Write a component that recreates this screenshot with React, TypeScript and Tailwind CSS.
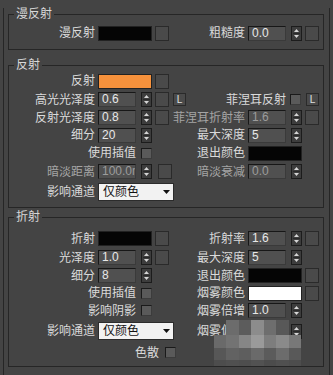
import React from "react";

type Kids = { children?: React.ReactNode };

const Spin = () => (
  <svg width="11" height="15" viewBox="0 0 11 15" className="ml-[2px] block shrink-0">
    <rect x="0.5" y="0.5" width="10" height="14" fill="#3d3d3d" stroke="#1c1c1c" />
    <line x1="2" y1="7.5" x2="9" y2="7.5" stroke="#2a2a2a" />
    <path d="M3 6h5L5.5 3z" fill="#d6d6d6" />
    <path d="M3 9h5l-2.5 3z" fill="#d6d6d6" />
  </svg>
);

const Num = ({ v, dim = false }: { v: string; dim?: boolean }) => (
  <div
    className={`h-[15px] w-[38px] shrink-0 overflow-hidden whitespace-nowrap border border-[#171717] border-r-[#3a3a3a] border-b-[#3a3a3a] bg-[#505050] pl-[3px] text-[12px] leading-[13px] ${
      dim ? "text-[#9c9c9c]" : "text-[#e8e8e8]"
    }`}
  >
    {v}
  </div>
);

const Sq = () => <div className="h-[15px] w-[14px] shrink-0 border border-[#2a2a2a] bg-[#4a4a4a]" />;

const Swatch = ({ color }: { color: string }) => (
  <div className={`h-[15px] w-[54px] shrink-0 border border-[#222] ${color}`} />
);

const Check = () => (
  <div className="h-[11px] w-[11px] shrink-0 border border-[#1a1a1a] border-r-[#3c3c3c] border-b-[#3c3c3c] bg-[#5a5a5a]" />
);

const LBtn = () => (
  <div className="ml-[1px] flex h-[13px] w-[13px] shrink-0 items-center justify-center border border-[#2a2a2a] bg-[#4a4a4a] text-[10px] leading-none text-[#e0e0e0]">
    L
  </div>
);

const Drop = () => (
  <div className="flex h-[18px] w-[76px] shrink-0 items-center justify-between border border-[#2c2c2c] bg-[#f2f2f2] pl-[4px] pr-[3px] text-[12px] leading-none text-[#111]">
    <span>仅颜色</span>
    <svg width="7" height="4" viewBox="0 0 7 4">
      <path d="M0 0h7L3.5 4z" fill="#111" />
    </svg>
  </div>
);

const tone = (dim?: boolean) => (dim ? "text-[#a4a4a4]" : "text-[#dadada]");

const Left = ({ label, dim, children }: Kids & { label: string; dim?: boolean }) => (
  <div className="flex w-[164px] shrink-0 items-center">
    <span className={`w-[89px] shrink-0 pr-[3px] text-right ${tone(dim)}`}>{label}</span>
    <div className="flex items-center gap-[3px]">{children}</div>
  </div>
);

const Right = ({ label, dim, children }: Kids & { label: string; dim?: boolean }) => (
  <div className="flex flex-1 items-center">
    <span className={`w-[75px] shrink-0 pr-[3px] text-right ${tone(dim)}`}>{label}</span>
    <div className="flex items-center gap-[3px]">{children}</div>
  </div>
);

const LeftCheck = ({ label }: { label: string }) => (
  <div className="flex w-[164px] shrink-0 items-center justify-end gap-[5px] pr-[21px]">
    <span className="text-[#dadada]">{label}</span>
    <Check />
  </div>
);

const Row = ({ cls, children }: Kids & { cls: string }) => (
  <div className={`flex items-center ${cls}`}>{children}</div>
);

const Group = ({ title, cls, children }: Kids & { title: string; cls: string }) => (
  <fieldset className={`ml-[4px] w-[316px] border border-[#262626] ${cls}`}>
    <legend className="ml-[5px] px-[2px] text-[12px] leading-[12px] text-[#d8d8d8]">{title}</legend>
    {children}
  </fieldset>
);

const mosaic = [
  ["", "#6c6c6c", "#5c5c5c", "#8c8c8c", "#6e6e6e", "#585858", ""],
  ["#6a6a6a", "#737373", "#868686", "#9a9a9a", "#7d7d7d", "#8a8a8a", "#787878"],
  ["#575757", "#626262", "#5e5e5e", "#6a6a6a", "#5b5b5b", "#6c6c6c", "#595959"],
  ["#4d4d4d", "#505050", "#4e4e4e", "#525252", "#4c4c4c", "#505050", "#4d4d4d"],
];

export default function App() {
  return (
    <div className="relative h-[375px] w-[333px] overflow-hidden bg-[#444] font-['Liberation_Sans','Noto_Sans_CJK_SC',sans-serif] text-[12px] leading-none">
      <div className="ml-[3px] h-[371px] w-[327px] border-x border-b border-[#262626]">
        <Group title="漫反射" cls="mt-[8px] pb-[7px]">
          <Row cls="mt-[4px] h-[18px]">
            <Left label="漫反射">
              <Swatch color="bg-[#050505]" />
              <Sq />
            </Left>
            <Right label="粗糙度">
              <Num v="0.0" />
              <Spin />
              <Sq />
            </Right>
          </Row>
        </Group>

        <Group title="反射" cls="mt-[9px] pb-[5px]">
          <Row cls="mt-[1px] h-[18px]">
            <Left label="反射">
              <Swatch color="bg-[#f7923c]" />
              <Sq />
            </Left>
          </Row>
          <Row cls="h-[19px]">
            <Left label="高光光泽度">
              <Num v="0.6" />
              <Spin />
              <Sq />
              <LBtn />
            </Left>
            <div className="flex flex-1 items-center justify-end gap-[4px] pr-[4px]">
              <span className="text-[#dadada]">菲涅耳反射</span>
              <Check />
              <LBtn />
            </div>
          </Row>
          <Row cls="h-[17px]">
            <Left label="反射光泽度">
              <Num v="0.8" />
              <Spin />
              <Sq />
            </Left>
            <Right label="菲涅耳折射率" dim>
              <Num v="1.6" dim />
              <Spin />
              <Sq />
            </Right>
          </Row>
          <Row cls="h-[18px]">
            <Left label="细分">
              <Num v="20" />
              <Spin />
            </Left>
            <Right label="最大深度">
              <Num v="5" />
              <Spin />
            </Right>
          </Row>
          <Row cls="h-[18px]">
            <LeftCheck label="使用插值" />
            <Right label="退出颜色">
              <Swatch color="bg-[#050505]" />
            </Right>
          </Row>
          <Row cls="h-[19px]">
            <Left label="暗淡距离" dim>
              <Num v="100.0m" dim />
              <Spin />
              <div className="ml-[3px] flex">
                <Sq />
              </div>
            </Left>
            <Right label="暗淡衰减" dim>
              <Num v="0.0" dim />
              <Spin />
            </Right>
          </Row>
          <Row cls="h-[21px]">
            <Left label="影响通道">
              <Drop />
            </Left>
          </Row>
        </Group>

        <Group title="折射" cls="mt-[3px] pb-[4px]">
          <Row cls="mt-[6px] h-[19px]">
            <Left label="折射">
              <Swatch color="bg-[#050505]" />
              <Sq />
            </Left>
            <Right label="折射率">
              <Num v="1.6" />
              <Spin />
              <Sq />
            </Right>
          </Row>
          <Row cls="h-[19px]">
            <Left label="光泽度">
              <Num v="1.0" />
              <Spin />
              <Sq />
            </Left>
            <Right label="最大深度">
              <Num v="5" />
              <Spin />
            </Right>
          </Row>
          <Row cls="h-[17px]">
            <Left label="细分">
              <Num v="8" />
              <Spin />
            </Left>
            <Right label="退出颜色">
              <Swatch color="bg-[#050505]" />
              <Sq />
            </Right>
          </Row>
          <Row cls="h-[18px]">
            <LeftCheck label="使用插值" />
            <Right label="烟雾颜色">
              <Swatch color="bg-[#ffffff]" />
              <Sq />
            </Right>
          </Row>
          <Row cls="h-[17px]">
            <LeftCheck label="影响阴影" />
            <Right label="烟雾倍增">
              <Num v="1.0" />
              <Spin />
            </Right>
          </Row>
          <Row cls="h-[24px]">
            <Left label="影响通道">
              <Drop />
            </Left>
            <Right label="烟雾偏移">
              <Num v="0.0" />
              <Spin />
            </Right>
          </Row>
          <Row cls="h-[19px]">
            <div className="flex w-[167px] shrink-0 items-center justify-end gap-[6px]">
              <span className="text-[#dadada]">色散</span>
              <Check />
            </div>
          </Row>
        </Group>
      </div>
      <div className="h-[4px] bg-[#7d7061]" />

      {/* pixelated watermark */}
      <div className="absolute left-[214px] top-[320px] grid w-[87px] grid-cols-7 grid-rows-[15px_13px_12px_6px]">
        {mosaic.flat().map((c, i) => (
          <div key={i} style={{ background: c || "transparent" }} />
        ))}
      </div>
    </div>
  );
}
